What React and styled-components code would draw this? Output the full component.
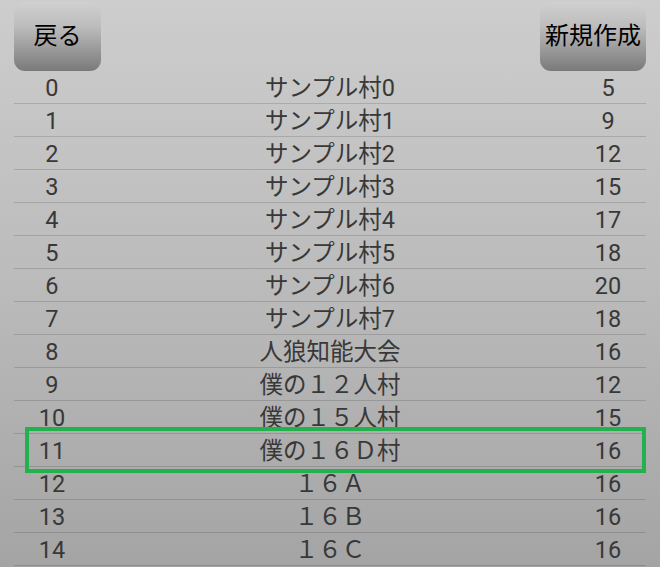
import React from 'react';
import styled, { createGlobalStyle } from 'styled-components';

const GlobalStyle = createGlobalStyle`
  html, body {
    margin: 0;
    padding: 0;
    height: 100%;
  }
  body {
    background: linear-gradient(to bottom, #cdcdcd 0%, #bbbbbb 50%, #a4a4a4 100%);
    font-family: Roboto, "Noto Sans CJK JP", sans-serif;
    overflow: hidden;
  }
`;

const Screen = styled.div`
  position: relative;
  height: 567px;
  padding: 0 14px;
  box-sizing: border-box;
`;

const Toolbar = styled.div`
  display: flex;
  justify-content: space-between;
  align-items: flex-end;
  height: 71px;
  padding-top: 2px;
  box-sizing: border-box;
`;

const Button = styled.button`
  height: 69px;
  min-width: 87px;
  padding: 0 5px;
  border: none;
  border-radius: 11px;
  background: linear-gradient(to bottom, #d0d0d0 0%, #bdbdbd 35%, #7a7a7a 100%);
  color: #000;
  font-family: Roboto, "Noto Sans CJK JP", sans-serif;
  font-size: 24px;
  line-height: 1;
  padding-bottom: 2px;
  cursor: pointer;
`;

const Table = styled.div`
  display: flex;
  flex-direction: column;
`;

const Row = styled.div`
  display: grid;
  grid-template-columns: 12% 76% 12%;
  height: 33px;
  border-bottom: 1px solid rgba(0, 0, 0, 0.14);
  box-sizing: border-box;
  align-items: center;
  color: #383838;
  font-size: 23.5px;
  line-height: 1;
`;

const Cell = styled.div`
  text-align: center;
  white-space: nowrap;
  padding-top: 4px;
`;

const Highlight = styled.div`
  position: absolute;
  left: 25px;
  top: 427px;
  width: 621px;
  height: 46px;
  border: 4px solid #22b14c;
  box-sizing: border-box;
  pointer-events: none;
`;

const villages = [
  { id: 0, name: 'サンプル村0', size: 5 },
  { id: 1, name: 'サンプル村1', size: 9 },
  { id: 2, name: 'サンプル村2', size: 12 },
  { id: 3, name: 'サンプル村3', size: 15 },
  { id: 4, name: 'サンプル村4', size: 17 },
  { id: 5, name: 'サンプル村5', size: 18 },
  { id: 6, name: 'サンプル村6', size: 20 },
  { id: 7, name: 'サンプル村7', size: 18 },
  { id: 8, name: '人狼知能大会', size: 16 },
  { id: 9, name: '僕の１２人村', size: 12 },
  { id: 10, name: '僕の１５人村', size: 15 },
  { id: 11, name: '僕の１６Ｄ村', size: 16 },
  { id: 12, name: '１６Ａ', size: 16 },
  { id: 13, name: '１６Ｂ', size: 16 },
  { id: 14, name: '１６Ｃ', size: 16 },
];

export default function App() {
  return (
    <>
      <GlobalStyle />
      <Screen>
        <Toolbar>
          <Button>戻る</Button>
          <Button>新規作成</Button>
        </Toolbar>
        <Table>
          {villages.map((v) => (
            <Row key={v.id}>
              <Cell>{v.id}</Cell>
              <Cell>{v.name}</Cell>
              <Cell>{v.size}</Cell>
            </Row>
          ))}
        </Table>
        <Highlight />
      </Screen>
    </>
  );
}
